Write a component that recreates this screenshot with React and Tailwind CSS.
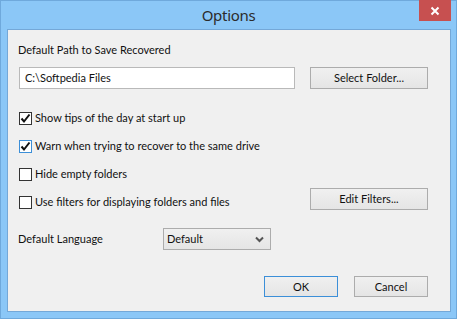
import React from "react";

const font = "font-['Lato','Noto_Sans',sans-serif]";

function Check({ checked, focus }) {
  return (
    <div
      className={`w-[13px] h-[13px] border bg-white flex items-center justify-center shrink-0 ${
        focus ? "border-[#3c8fd8]" : "border-[#333333]"
      }`}
    >
      {checked && (
        <svg width="11" height="11" viewBox="0 0 11 11">
          <path d="M1.5 5.5 L4 8.5 L9.5 1.5" fill="none" stroke="#111" strokeWidth="2" />
        </svg>
      )}
    </div>
  );
}

function Btn({ children, wide = true, className = "", focus }) {
  return (
    <div
      className={`border flex items-center justify-center bg-gradient-to-b from-[#f0f0f0] to-[#e5e5e5] text-[#111] ${
        wide ? "w-[118px] h-[22px]" : "w-[74px] h-[21px]"
      } ${focus ? "border-[#3c8fd8]" : "border-[#acacac]"} ${className}`}
    >
      {children}
    </div>
  );
}

function Row({ checked, focus, label, children }) {
  return (
    <div className="h-[28px] flex items-center pl-[11px] pr-[22px]">
      <Check checked={checked} focus={focus} />
      <span className="ml-[3px] text-[#111]">{label}</span>
      <div className="flex-1" />
      {children}
    </div>
  );
}

export default function App() {
  return (
    <div
      className={`w-[457px] h-[319px] bg-[#8bc7f7] border border-[#6fa9dc] flex flex-col ${font} text-[11px] leading-[16px]`}
    >
      <div className="h-[28px] relative flex items-center justify-center">
        <span className="text-[15px] text-[#2b2b2b] font-['Noto_Sans',sans-serif] tracking-[-0.3px]">Options</span>
        <div className="absolute top-[-1px] left-[418px] w-[32px] h-[21px] bg-[#c75050] flex items-center justify-center">
          <svg width="10" height="10" viewBox="0 0 10 10">
            <path d="M1.5 1.5 L8.5 8.5 M8.5 1.5 L1.5 8.5" stroke="#fff" strokeWidth="2" />
          </svg>
        </div>
      </div>
      <div className="ml-[6px] w-[444px] h-[283px] border border-[#74a8d8] bg-[#f0f0f0] flex flex-col">
        <div className="mt-[12px] pl-[10px] text-[#111]">Default Path to Save Recovered</div>
        <div className="mt-[9px] flex items-center pl-[11px] pr-[22px]">
          <div className="w-[276px] h-[22px] border border-[#b9b9b9] bg-white flex items-center pl-[5px] text-[#111]">
            C:\Softpedia Files
          </div>
          <div className="flex-1" />
          <Btn>Select Folder...</Btn>
        </div>
        <div className="mt-[15px] flex flex-col">
          <Row checked label="Show tips of the day at start up" />
          <Row checked focus label="Warn when trying to recover to the same drive" />
          <Row label="Hide empty folders" />
          <Row label="Use filters for displaying folders and files">
            <Btn className="mb-[7px]">Edit Filters...</Btn>
          </Row>
        </div>
        <div className="mt-[12px] h-[22px] flex items-center pl-[10px]">
          <span className="w-[145px] text-[#111]">Default Language</span>
          <div className="w-[108px] h-[22px] border border-[#acacac] bg-gradient-to-b from-[#f0f0f0] to-[#e5e5e5] flex items-center pl-[3px] pr-[6px] text-[#111]">
            <span className="flex-1">Default</span>
            <svg width="9" height="7" viewBox="0 0 9 7">
              <path d="M1 1.5 L4.5 5 L8 1.5" fill="none" stroke="#555" strokeWidth="2" />
            </svg>
          </div>
        </div>
        <div className="mt-[26px] flex justify-end gap-[16px] pr-[22px]">
          <Btn focus wide={false}>OK</Btn>
          <Btn wide={false}>Cancel</Btn>
        </div>
      </div>
    </div>
  );
}
